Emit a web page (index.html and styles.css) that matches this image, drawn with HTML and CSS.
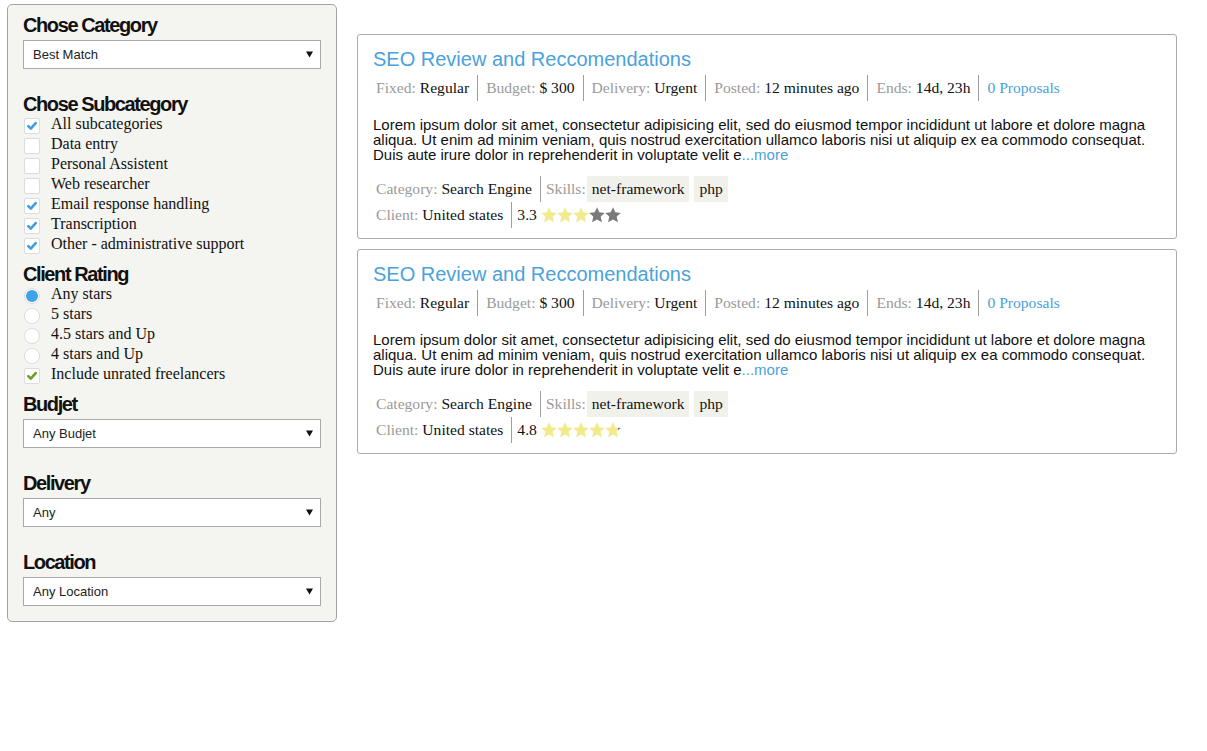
FILE: index.html
```html
<!DOCTYPE html>
<html lang="en">
<head>
<meta charset="utf-8">
<title>Jobs</title>
<link rel="stylesheet" href="styles.css">
</head>
<body>
<svg class="defs" width="0" height="0" aria-hidden="true">
  <defs>
    <linearGradient id="star-part" x1="0" x2="1" y1="0" y2="0">
      <stop offset="0.82" stop-color="#f2eb8e"/>
      <stop offset="0.82" stop-color="#7a7a7a"/>
    </linearGradient>
  </defs>
</svg>
<div class="page">
  <aside class="filters">
    <h3 class="filter-title">Chose Category</h3>
    <select class="filter-select"><option>Best Match</option></select>

    <h3 class="filter-title after-select list-head">Chose Subcategory</h3>
    <ul class="opt-list">
      <li class="opt"><span class="box"><svg class="tick blue" viewBox="0 0 16 16"><path d="M3.8 8.2 6.6 11 12.2 4.6"/></svg></span>All subcategories</li>
      <li class="opt"><span class="box"></span>Data entry</li>
      <li class="opt"><span class="box"></span>Personal Assistent</li>
      <li class="opt"><span class="box"></span>Web researcher</li>
      <li class="opt"><span class="box"><svg class="tick blue" viewBox="0 0 16 16"><path d="M3.8 8.2 6.6 11 12.2 4.6"/></svg></span>Email response handling</li>
      <li class="opt"><span class="box"><svg class="tick blue" viewBox="0 0 16 16"><path d="M3.8 8.2 6.6 11 12.2 4.6"/></svg></span>Transcription</li>
      <li class="opt"><span class="box"><svg class="tick blue" viewBox="0 0 16 16"><path d="M3.8 8.2 6.6 11 12.2 4.6"/></svg></span>Other - administrative support</li>
    </ul>

    <h3 class="filter-title after-list list-head">Client Rating</h3>
    <ul class="opt-list">
      <li class="opt"><span class="box radio on"></span>Any stars</li>
      <li class="opt"><span class="box radio"></span>5 stars</li>
      <li class="opt"><span class="box radio"></span>4.5 stars and Up</li>
      <li class="opt"><span class="box radio"></span>4 stars and Up</li>
      <li class="opt"><span class="box"><svg class="tick green" viewBox="0 0 16 16"><path d="M3.8 8.2 6.6 11 12.2 4.6"/></svg></span>Include unrated freelancers</li>
    </ul>

    <h3 class="filter-title after-list">Budjet</h3>
    <select class="filter-select"><option>Any Budjet</option></select>

    <h3 class="filter-title after-select">Delivery</h3>
    <select class="filter-select"><option>Any</option></select>

    <h3 class="filter-title after-select">Location</h3>
    <select class="filter-select"><option>Any Location</option></select>
  </aside>

  <main class="results">
    <article class="job">
      <h2 class="job-title">SEO Review and Reccomendations</h2>
      <ul class="job-meta">
        <li><span class="lbl">Fixed:</span> Regular</li>
        <li><span class="lbl">Budget:</span> $ 300</li>
        <li><span class="lbl">Delivery:</span> Urgent</li>
        <li><span class="lbl">Posted:</span> 12 minutes ago</li>
        <li><span class="lbl">Ends:</span> 14d, 23h</li>
        <li class="proposals">0 Proposals</li>
      </ul>
      <p class="job-desc">Lorem ipsum dolor sit amet, consectetur adipisicing elit, sed do eiusmod tempor incididunt ut labore et dolore magna aliqua. Ut enim ad minim veniam, quis nostrud exercitation ullamco laboris nisi ut aliquip ex ea commodo consequat. Duis aute irure dolor in reprehenderit in voluptate velit e<span class="more">...more</span></p>
      <ul class="foot-row">
        <li><span class="lbl">Category:</span> Search Engine</li>
        <li><span class="lbl">Skills:</span> <span class="tag">net-framework</span><span class="tag">php</span></li>
      </ul>
      <ul class="foot-row">
        <li><span class="lbl">Client:</span> United states</li>
        <li>3.3<span class="stars">
          <svg class="star on" viewBox="0 0 16 16"><polygon points="8,0.3 10.3,5.3 15.8,5.9 11.7,9.6 12.9,15.2 8,12.4 3.1,15.2 4.3,9.6 0.2,5.9 5.7,5.3"/></svg>
          <svg class="star on" viewBox="0 0 16 16"><polygon points="8,0.3 10.3,5.3 15.8,5.9 11.7,9.6 12.9,15.2 8,12.4 3.1,15.2 4.3,9.6 0.2,5.9 5.7,5.3"/></svg>
          <svg class="star on" viewBox="0 0 16 16"><polygon points="8,0.3 10.3,5.3 15.8,5.9 11.7,9.6 12.9,15.2 8,12.4 3.1,15.2 4.3,9.6 0.2,5.9 5.7,5.3"/></svg>
          <svg class="star off" viewBox="0 0 16 16"><polygon points="8,0.3 10.3,5.3 15.8,5.9 11.7,9.6 12.9,15.2 8,12.4 3.1,15.2 4.3,9.6 0.2,5.9 5.7,5.3"/></svg>
          <svg class="star off" viewBox="0 0 16 16"><polygon points="8,0.3 10.3,5.3 15.8,5.9 11.7,9.6 12.9,15.2 8,12.4 3.1,15.2 4.3,9.6 0.2,5.9 5.7,5.3"/></svg>
        </span></li>
      </ul>
    </article>

    <article class="job">
      <h2 class="job-title">SEO Review and Reccomendations</h2>
      <ul class="job-meta">
        <li><span class="lbl">Fixed:</span> Regular</li>
        <li><span class="lbl">Budget:</span> $ 300</li>
        <li><span class="lbl">Delivery:</span> Urgent</li>
        <li><span class="lbl">Posted:</span> 12 minutes ago</li>
        <li><span class="lbl">Ends:</span> 14d, 23h</li>
        <li class="proposals">0 Proposals</li>
      </ul>
      <p class="job-desc">Lorem ipsum dolor sit amet, consectetur adipisicing elit, sed do eiusmod tempor incididunt ut labore et dolore magna aliqua. Ut enim ad minim veniam, quis nostrud exercitation ullamco laboris nisi ut aliquip ex ea commodo consequat. Duis aute irure dolor in reprehenderit in voluptate velit e<span class="more">...more</span></p>
      <ul class="foot-row">
        <li><span class="lbl">Category:</span> Search Engine</li>
        <li><span class="lbl">Skills:</span> <span class="tag">net-framework</span><span class="tag">php</span></li>
      </ul>
      <ul class="foot-row">
        <li><span class="lbl">Client:</span> United states</li>
        <li>4.8<span class="stars">
          <svg class="star on" viewBox="0 0 16 16"><polygon points="8,0.3 10.3,5.3 15.8,5.9 11.7,9.6 12.9,15.2 8,12.4 3.1,15.2 4.3,9.6 0.2,5.9 5.7,5.3"/></svg>
          <svg class="star on" viewBox="0 0 16 16"><polygon points="8,0.3 10.3,5.3 15.8,5.9 11.7,9.6 12.9,15.2 8,12.4 3.1,15.2 4.3,9.6 0.2,5.9 5.7,5.3"/></svg>
          <svg class="star on" viewBox="0 0 16 16"><polygon points="8,0.3 10.3,5.3 15.8,5.9 11.7,9.6 12.9,15.2 8,12.4 3.1,15.2 4.3,9.6 0.2,5.9 5.7,5.3"/></svg>
          <svg class="star on" viewBox="0 0 16 16"><polygon points="8,0.3 10.3,5.3 15.8,5.9 11.7,9.6 12.9,15.2 8,12.4 3.1,15.2 4.3,9.6 0.2,5.9 5.7,5.3"/></svg>
          <svg class="star part" viewBox="0 0 16 16"><polygon points="8,0.3 10.3,5.3 15.8,5.9 11.7,9.6 12.9,15.2 8,12.4 3.1,15.2 4.3,9.6 0.2,5.9 5.7,5.3"/></svg>
        </span></li>
      </ul>
    </article>
  </main>
</div>
</body>
</html>
```

FILE: styles.css
```css
html, body {
  margin: 0;
  background: #fff;
}

.defs {
  position: absolute;
  width: 0;
  height: 0;
}

.page {
  display: flex;
  align-items: flex-start;
  gap: 20px;
  padding: 4px 7px;
}

/* ---------- sidebar ---------- */
.filters {
  width: 330px;
  flex: none;
  box-sizing: border-box;
  background: #f4f4f0;
  border: 1px solid #a3a3a3;
  border-radius: 5px;
  padding: 10px 15px 15px;
  font-family: "Liberation Serif", "Times New Roman", serif;
  color: #111;
}

.filter-title {
  margin: 0 0 5px;
  font: bold 20px/20px "Liberation Sans", Arial, sans-serif;
  letter-spacing: -1.4px;
  color: #111;
}

.filter-title.after-select {
  margin-top: 25px;
}

.filter-title.after-list {
  margin-top: 10px;
}

.filter-title.list-head {
  margin-bottom: 0;
}

.filter-select {
  display: block;
  width: 100%;
  height: 29px;
  box-sizing: border-box;
  margin: 0;
  padding: 0 0 0 9px;
  border: 1px solid #a9a9a9;
  border-radius: 0;
  -webkit-appearance: none;
  appearance: none;
  background: #fff url("data:image/svg+xml;utf8,<svg xmlns='http://www.w3.org/2000/svg' width='7' height='7'><path d='M0 0.5H7L3.5 6.5z' fill='%23111'/></svg>") no-repeat right 7px center;
  font: 13px "Liberation Sans", Arial, sans-serif;
  color: #222;
}

.opt-list {
  list-style: none;
  margin: 0;
  padding: 0;
}

.opt {
  display: flex;
  align-items: flex-start;
  gap: 11px;
  height: 20px;
  font-size: 16px;
  line-height: 20px;
}

.box {
  flex: none;
  width: 16px;
  height: 16px;
  box-sizing: border-box;
  margin: 4px 0 0 1px;
  border: 1px solid #dcdcdc;
  border-radius: 2px;
  background: #fff;
  display: flex;
  align-items: center;
  justify-content: center;
}

.box.radio {
  border-radius: 50%;
}

.box.radio.on::after {
  content: "";
  width: 12px;
  height: 12px;
  border-radius: 50%;
  background: #3ea3e6;
}

.tick {
  width: 14px;
  height: 14px;
  fill: none;
  stroke-width: 3;
  stroke-linecap: round;
  stroke-linejoin: round;
}

.tick.blue {
  stroke: #3d9fe2;
}

.tick.green {
  stroke: #6a9f24;
}

/* ---------- results ---------- */
.results {
  width: 820px;
  margin-top: 30px;
  display: flex;
  flex-direction: column;
  gap: 10px;
}

.job {
  border: 1px solid #ababab;
  border-radius: 3px;
  padding: 13px 15px 10px;
}

.job-title {
  margin: 0 0 5px;
  font: normal 20px/22px "Liberation Sans", Arial, sans-serif;
  color: #4aa2dc;
}

.job-meta,
.foot-row {
  display: flex;
  list-style: none;
  margin: 0;
  padding: 0;
  font: 15.6px/26px "Liberation Serif", "Times New Roman", serif;
  color: #111;
}

.job-meta li {
  padding: 0 8px;
  border-right: 1px solid #9e9e9e;
}

.foot-row li {
  display: flex;
  align-items: flex-start;
  white-space: pre;
  padding: 0 8px 0 5px;
  border-right: 1px solid #9e9e9e;
}

.job-meta li:first-child,
.foot-row li:first-child {
  padding-left: 3px;
}

.job-meta li:last-child,
.foot-row li:last-child {
  border-right: 0;
}

.lbl {
  color: #9a9a9a;
}

.proposals {
  color: #4aa2dc;
}

.job-desc {
  margin: 16px 0 14px;
  font: 15px/15px "Liberation Sans", Arial, sans-serif;
  color: #111;
}

.more {
  color: #4aa2dc;
}

.tag {
  background: #f1f1ec;
  padding: 0 5px;
  margin-left: 1px;
}

.tag + .tag {
  margin-left: 5px;
}

.stars {
  display: flex;
  align-items: center;
  gap: 0;
  height: 26px;
  margin-left: 4px;
  white-space: normal;
}

.star {
  width: 16px;
  height: 16px;
}

.star.on {
  fill: #f2eb8e;
}

.star.off {
  fill: #7a7a7a;
}

.star.part {
  fill: url(#star-part);
}
```
